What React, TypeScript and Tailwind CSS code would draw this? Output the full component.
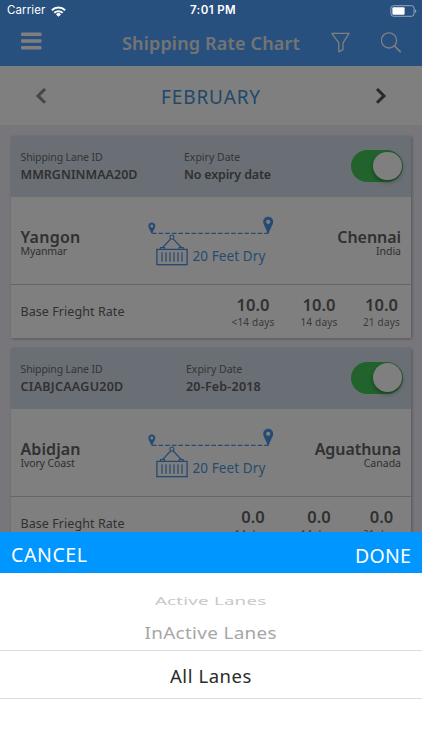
type Rate = { value: string; days: string };
type Lane = {
  id: string;
  idClass: string;
  expiry: string;
  expiryOffset: string;
  expiryTracking: string;
  from: string;
  fromClass: string;
  fromCountry: string;
  to: string;
  toCountry: string;
  rates: Rate[];
};

const lanes: Lane[] = [
  {
    id: "MMRGNINMAA20D",
    idClass: "tracking-[0.03px]",
    expiry: "No expiry date",
    expiryOffset: "ml-[46.5px]",
    expiryTracking: "tracking-[-0.17px]",
    from: "Yangon",
    fromClass: "tracking-[0.25px]",
    fromCountry: "Myanmar",
    to: "Chennai",
    toCountry: "India",
    rates: [
      { value: "10.0", days: "<14 days" },
      { value: "10.0", days: "14 days" },
      { value: "10.0", days: "21 days" },
    ],
  },
  {
    id: "CIABJCAAGU20D",
    idClass: "tracking-[0.27px]",
    expiry: "20-Feb-2018",
    expiryOffset: "ml-[48.5px]",
    expiryTracking: "tracking-[0.2px]",
    from: "Abidjan",
    fromClass: "tracking-[0.08px]",
    fromCountry: "Ivory Coast",
    to: "Aguathuna",
    toCountry: "Canada",
    rates: [
      { value: "0.0", days: "14 days" },
      { value: "0.0", days: "14 days" },
      { value: "0.0", days: "21 days" },
    ],
  },
];

function StatusBar() {
  return (
    <div className="absolute inset-x-0 top-0 z-20 grid h-[22px] grid-cols-3 items-center pl-[7px] pr-[5px] font-['Inter',sans-serif] text-[11.5px] text-white">
      <div className="flex items-center gap-[6px]">
        <span className="tracking-[0.1px]">Carrier</span>
        <svg className="h-[11px] w-[15px]" viewBox="0 0 15 11" fill="none" stroke="white" strokeWidth="2">
          <path d="M.9 4.3a9.4 9.4 0 0 1 13.2 0" />
          <path d="M3.3 6.9a5.9 5.9 0 0 1 8.4 0" />
          <path d="M7.5 10.8 5 8.4a3.5 3.5 0 0 1 5 0z" fill="white" stroke="none" />
        </svg>
      </div>
      <span className="whitespace-nowrap pl-[2px] text-center font-semibold tracking-[0.4px]">7:01 PM</span>
      <svg className="h-[12px] w-[27px] justify-self-end" viewBox="0 0 27 12">
        <rect x="0.9" y="0.7" width="23.2" height="10.6" rx="2.6" fill="none" stroke="#9fb0c4" strokeWidth="0.9" />
        <rect x="2.4" y="2.2" width="12.2" height="7.6" rx="1" fill="white" />
        <path d="M25.2 4.2c1.4.5 1.4 3.1 0 3.6z" fill="#9fb0c4" />
      </svg>
    </div>
  );
}

function Header() {
  return (
    <header className="flex h-[66px] items-start bg-[#4ea0fc] pl-[20.5px] pr-[20px] pt-[22px]">
      <div className="flex h-[38px] w-[101.5px] shrink-0 items-center">
        <svg className="h-[18px] w-[21px]" viewBox="0 0 21 18" fill="white">
          <rect y="0.5" width="20.5" height="3.6" rx="1" />
          <rect y="7.2" width="20.5" height="3.6" rx="1" />
          <rect y="13.9" width="20.5" height="3.6" rx="1" />
        </svg>
      </div>
      <h1 className="h-[40px] w-[208.5px] shrink-0 whitespace-nowrap text-[18px] font-semibold leading-[42px] tracking-[0.17px] text-[#e8e8e8]">
        Shipping Rate Chart
      </h1>
      <svg className="mt-[10px] h-[21px] w-[19px] shrink-0" viewBox="0 0 19 21" fill="none" stroke="white" strokeWidth="1.3" strokeLinejoin="round">
        <path d="M.9 1.4h17.2L12 10.8v6.8l-4.2 2.2v-9z" />
      </svg>
      <svg className="ml-auto mt-[10px] h-[21px] w-[21px] shrink-0" viewBox="0 0 21 21" fill="none" stroke="white" strokeWidth="1.3" strokeLinecap="round">
        <circle cx="8" cy="8.4" r="7.6" />
        <path d="m13.6 14 5.6 5.6" strokeWidth="1.7" />
      </svg>
    </header>
  );
}

function MonthBar() {
  return (
    <div className="flex h-[59px] items-center justify-between bg-white pl-[35px] pr-[35px] pt-[1px]">
      <svg className="h-[17px] w-[12px]" viewBox="0 0 12 17" fill="none" stroke="#8c8c8c" strokeWidth="3">
        <path d="M10 1 3 7.9l7 6.9" />
      </svg>
      <span className="pt-[2px] text-[19px] leading-[57px] tracking-[0.87px] text-[#3f90d4]">FEBRUARY</span>
      <svg className="h-[17px] w-[12px]" viewBox="0 0 12 17" fill="none" stroke="#555" strokeWidth="3">
        <path d="m2 1 7 6.9-7 6.9" />
      </svg>
    </div>
  );
}

function RouteGraphic() {
  return (
    <svg className="absolute left-[137px] top-[19px] h-[52px] w-[127px]" viewBox="148 216 127 52" fill="none">
      <path
        fillRule="evenodd"
        fill="#4b97e8"
        d="M151.8 222.5c2 0 3.5 1.5 3.5 3.4 0 2.3-2.4 4.6-3 7.6h-1c-.6-3-3-5.3-3-7.6 0-1.9 1.5-3.4 3.5-3.4zm0 2a1.5 1.5 0 1 0 0 3 1.5 1.5 0 0 0 0-3z"
      />
      <path
        fillRule="evenodd"
        fill="#4b97e8"
        d="M268.2 216.8c2.9 0 5 2.2 5 5 0 3.3-3.4 6.6-4.2 11.7h-1.6c-.8-5.1-4.2-8.4-4.2-11.7 0-2.8 2.1-5 5-5zm0 2.9a2.1 2.1 0 1 0 0 4.2 2.1 2.1 0 0 0 0-4.2z"
      />
      <path d="M152 233.4H268" stroke="#4b97e8" strokeWidth="1.2" strokeDasharray="4.6 2" />
      <g stroke="#4b8fe0" strokeWidth="1.1">
        <rect x="170" y="235.2" width="3.8" height="3.8" rx="1.2" />
        <path d="m170.6 239-8.4 9M173.2 239l8.6 9" />
        <path d="M160.5 249.3v-1.8h4v1.8M179.2 249.3v-1.8h4v1.8" />
        <rect x="156.9" y="249.4" width="30.2" height="15.3" strokeWidth="1.3" />
        <path d="M162 252.3v9.5M166 252.3v9.5M170 252.3v9.5M174 252.3v9.5M178 252.3v9.5M182 252.3v9.5" strokeWidth="1.2" />
      </g>
    </svg>
  );
}

function Toggle() {
  return (
    <div className="flex h-[32px] w-[52px] items-center justify-end rounded-full bg-[#45c558] pr-[1.5px]">
      <div className="h-[28.5px] w-[28.5px] rounded-full bg-white shadow-[0_2px_4px_rgba(0,0,0,0.35)]" />
    </div>
  );
}

function LaneCard({ lane }: { lane: Lane }) {
  return (
    <section className="h-[201.5px] w-[400.5px] bg-white text-[#626262] shadow-[1px_1px_3px_rgba(0,0,0,0.28)]">
      <div className="flex h-[61px] items-start bg-[#d4deea] pl-[10px] pt-[13px]">
        <div className="w-[117px] whitespace-nowrap">
          <p className="text-[10.5px] leading-[17px] tracking-[-0.13px] text-[#6c6c6c]">Shipping Lane ID</p>
          <p className={"text-[12.5px] font-semibold leading-[17px] " + lane.idClass}>{lane.id}</p>
        </div>
        <div className={"whitespace-nowrap " + lane.expiryOffset}>
          <p className="text-[10.5px] leading-[17px] text-[#6c6c6c]">Expiry Date</p>
          <p className={"text-[12.5px] font-semibold leading-[17px] " + lane.expiryTracking}>{lane.expiry}</p>
        </div>
        <div className="ml-auto mr-[8px] mt-[1px]">
          <Toggle />
        </div>
      </div>
      <div className="relative flex h-[88px] justify-between border-b border-[#cccccc] px-[10px] pt-[31px]">
        <div>
          <p className={"text-[16px] font-semibold leading-[18px] " + lane.fromClass}>{lane.from}</p>
          <p className="text-[10.5px] leading-[10px] tracking-[-0.12px]">{lane.fromCountry}</p>
        </div>
        <RouteGraphic />
        <span className="absolute left-[182px] top-[50px] text-[13.5px] leading-[18px] tracking-[0.1px] text-[#4b97dc]">
          20 Feet Dry
        </span>
        <div className="text-right">
          <p className="text-[16px] font-semibold leading-[18px] tracking-[-0.05px]">{lane.to}</p>
          <p className="text-[10.5px] leading-[10px]">{lane.toCountry}</p>
        </div>
      </div>
      <div className="flex h-[52px] justify-between pl-[10px] pt-[10px]">
        <span className="text-[12.5px] leading-[34px] tracking-[0.07px]">Base Frieght Rate</span>
        <div className="grid shrink-0 grid-cols-[66px_66px_59px] text-center">
          {lane.rates.map((rate, i) => (
            <div key={i}>
              <p className="text-[16.5px] font-semibold leading-[20px]">{rate.value}</p>
              <p className="text-[10px] leading-[15px] tracking-[0.2px] text-[#747474]">{rate.days}</p>
            </div>
          ))}
        </div>
      </div>
    </section>
  );
}

function PickerSheet() {
  return (
    <div className="absolute inset-x-0 bottom-0 z-20 h-[218.5px] bg-white">
      <div className="flex h-[41px] justify-between bg-[#0096ff] pl-[11px] pr-[11px] text-[19.5px] text-white">
        <button className="leading-[45px] tracking-[0.6px]">CANCEL</button>
        <button className="leading-[47px] tracking-[0.21px]">DONE</button>
      </div>
      <div className="flex h-[78px] flex-col items-center border-b border-[#dcdcdc] pt-[19px]">
        <p className="h-[20px] scale-x-[1.1] scale-y-[0.58] text-[17px] leading-[20px] tracking-[0.2px] text-[#c9c9c9]">Active Lanes</p>
        <p className="mt-[11px] h-[20px] scale-x-[1.11] text-[17px] leading-[20px] tracking-[0.3px] text-[#a6a6a6]">InActive Lanes</p>
      </div>
      <div className="flex h-[48px] items-center justify-center border-b border-[#dcdcdc] pt-[3px] text-[18.5px] tracking-[0.56px] text-[#2b2b2b]">
        All Lanes
      </div>
    </div>
  );
}

export default function App() {
  return (
    <div className="relative h-[750px] w-[422px] overflow-hidden bg-[#efedf6] font-['Noto_Sans',sans-serif]">
      <Header />
      <MonthBar />
      <main className="flex flex-col gap-[10px] pl-[10.5px] pt-[11px]">
        {lanes.map((lane) => (
          <LaneCard key={lane.id} lane={lane} />
        ))}
      </main>
      <div className="absolute inset-0 z-10 bg-black/50" />
      <StatusBar />
      <PickerSheet />
    </div>
  );
}
